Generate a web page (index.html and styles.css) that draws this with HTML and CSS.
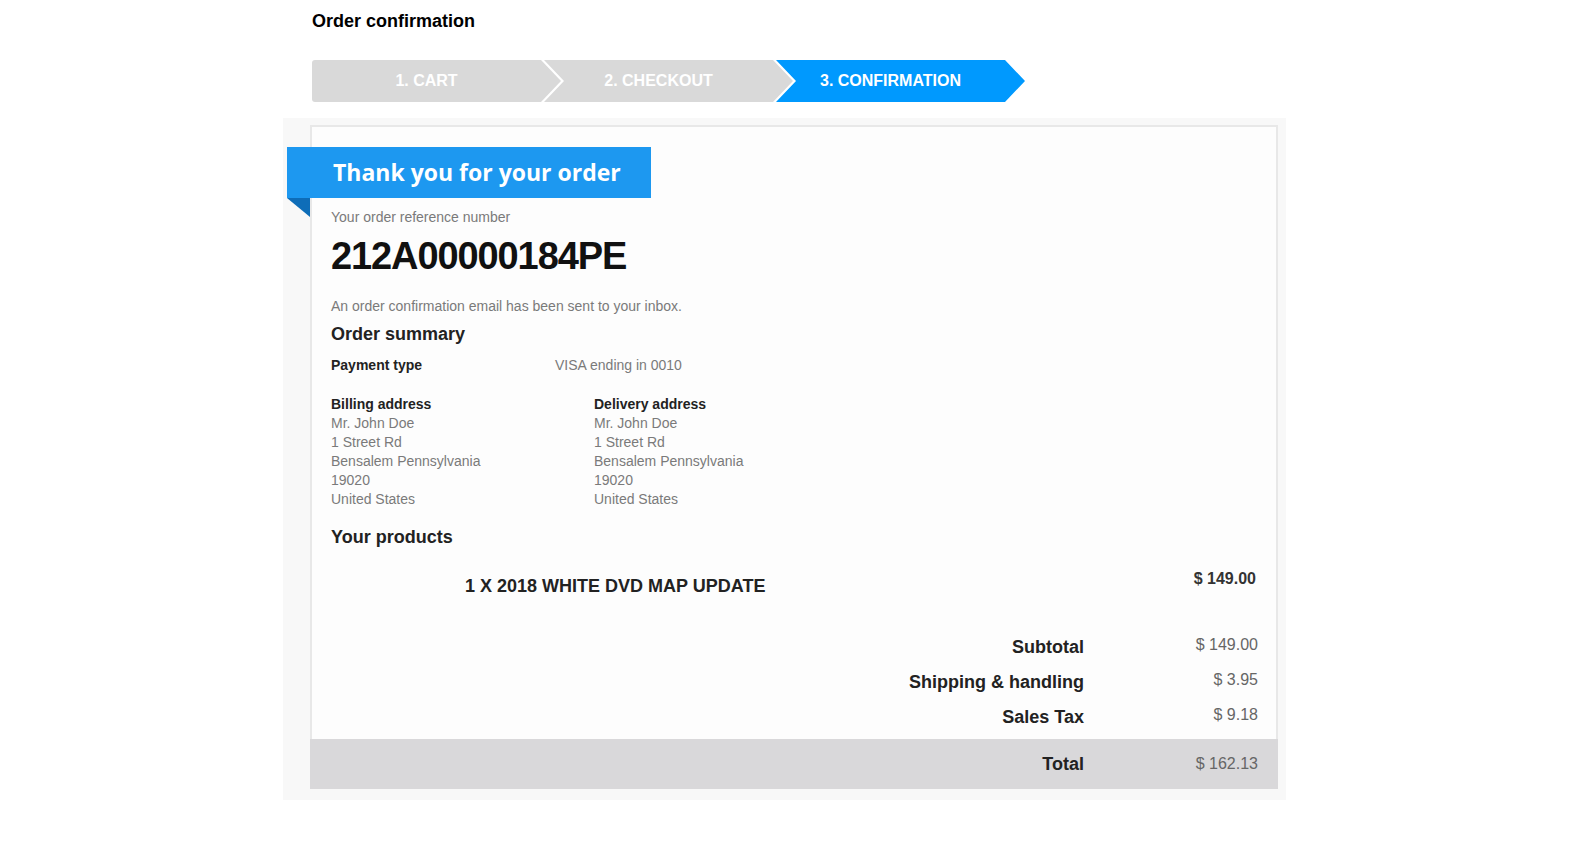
FILE: index.html
```html
<!DOCTYPE html>
<html lang="en">
<head>
<meta charset="utf-8">
<title>Order confirmation</title>
<link rel="stylesheet" href="styles.css">
</head>
<body>
<div class="page">
  <h1 class="title">Order confirmation</h1>
  <nav class="steps">
    <div class="step step-first">1. CART</div>
    <div class="step">2. CHECKOUT</div>
    <div class="step step-active">3. CONFIRMATION</div>
  </nav>
  <div class="panel">
    <div class="card">
      <div class="ribbon">Thank you for your order</div>
      <div class="content">
        <p class="muted ref-label">Your order reference number</p>
        <p class="order-no">212A00000184PE</p>
        <p class="muted email-note">An order confirmation email has been sent to your inbox.</p>
        <h2 class="section-title">Order summary</h2>
        <div class="pay-row">
          <span class="label pay-label">Payment type</span>
          <span class="muted">VISA ending in 0010</span>
        </div>
        <div class="addresses">
          <div class="address">
            <div class="label">Billing address</div>
            <div class="muted">Mr. John Doe</div>
            <div class="muted">1 Street Rd</div>
            <div class="muted">Bensalem Pennsylvania</div>
            <div class="muted">19020</div>
            <div class="muted">United States</div>
          </div>
          <div class="address">
            <div class="label">Delivery address</div>
            <div class="muted">Mr. John Doe</div>
            <div class="muted">1 Street Rd</div>
            <div class="muted">Bensalem Pennsylvania</div>
            <div class="muted">19020</div>
            <div class="muted">United States</div>
          </div>
        </div>
        <h2 class="section-title products-title">Your products</h2>
        <div class="product-row">
          <span class="product-name">1 X 2018 WHITE DVD MAP UPDATE</span>
          <span class="product-price">$ 149.00</span>
        </div>
        <div class="totals">
          <div class="total-row"><span class="t-label">Subtotal</span><span class="t-value">$ 149.00</span></div>
          <div class="total-row"><span class="t-label">Shipping &amp; handling</span><span class="t-value">$ 3.95</span></div>
          <div class="total-row"><span class="t-label">Sales Tax</span><span class="t-value">$ 9.18</span></div>
        </div>
      </div>
      <div class="grand-total"><span class="t-label">Total</span><span class="t-value">$ 162.13</span></div>
    </div>
  </div>
</div>
</body>
</html>
```

FILE: styles.css
```css
* { box-sizing: border-box; }
body {
  margin: 0;
  background: #ffffff;
  font-family: "Liberation Sans", Arial, sans-serif;
  color: #222;
}
p, h1, h2 { margin: 0; }

.page {
  width: 1003px;
  margin-left: 283px;
}

.title {
  padding: 10px 0 0 29px;
  font-size: 18px;
  line-height: 22px;
  font-weight: 700;
  color: #000;
}

.steps {
  display: flex;
  margin: 28px 0 0 29px;
  height: 42px;
}
.step {
  flex: none;
  width: 249px;
  margin-left: -17px;
  padding-right: 20px;
  display: flex;
  align-items: center;
  justify-content: center;
  background: #d9d9d9;
  color: #ffffff;
  font-size: 16px;
  font-weight: 700;
  clip-path: polygon(0 0, calc(100% - 20px) 0, 100% 50%, calc(100% - 20px) 100%, 0 100%, 20px 50%);
}
.step-first {
  margin-left: 0;
  border-radius: 3px 0 0 3px;
  clip-path: polygon(0 0, calc(100% - 20px) 0, 100% 50%, calc(100% - 20px) 100%, 0 100%);
}
.step-active {
  background: #0099fe;
}

.panel {
  margin-top: 16px;
  background: #f8f8f8;
  padding: 7px 8px 11px 27px;
}
.card {
  border: 2px solid #e8e8e8;
  background: #fdfdfd;
}

.ribbon {
  position: relative;
  margin: 20px 0 0 -25px;
  width: 364px;
  height: 51px;
  padding-left: 46px;
  background: #1d98f0;
  color: #ffffff;
  font-family: "Open Sans", "Liberation Sans", sans-serif;
  font-weight: 700;
  font-size: 23px;
  line-height: 51px;
}
.ribbon::after {
  content: "";
  position: absolute;
  left: 0;
  top: 100%;
  width: 23px;
  height: 19px;
  background: #0e6db8;
  clip-path: polygon(0 0, 100% 0, 100% 100%);
}

.content {
  padding: 0 18px 11px 19px;
}
.muted {
  color: #7a7a7a;
  font-size: 14px;
  line-height: 18px;
}
.label {
  font-size: 14px;
  line-height: 18px;
  font-weight: 700;
  color: #222;
}
.ref-label { margin-top: 10px; }
.order-no {
  margin-top: 8px;
  font-size: 38px;
  line-height: 44px;
  font-weight: 700;
  letter-spacing: -1.1px;
  color: #111;
}
.email-note { margin-top: 19px; }
.section-title {
  margin-top: 8px;
  font-size: 18px;
  line-height: 22px;
  font-weight: 700;
  color: #222;
}
.pay-row {
  display: flex;
  margin-top: 10.5px;
}
.pay-label { width: 224px; }

.addresses {
  display: flex;
  margin-top: 21px;
}
.address { width: 263px; }
.address .label,
.address .muted { line-height: 19px; }

.products-title { margin-top: 17.5px; }

.product-row {
  display: flex;
  align-items: flex-start;
  margin-top: 20.5px;
}
.product-name {
  margin: 6px 0 0 134px;
  font-size: 18px;
  line-height: 22px;
  font-weight: 700;
  color: #222;
}
.product-price {
  margin-left: auto;
  margin-right: 2px;
  font-size: 16px;
  line-height: 20px;
  font-weight: 700;
  color: #333;
}

.totals {
  display: flex;
  flex-direction: column;
  gap: 12px;
  margin-top: 38.5px;
}
.total-row {
  display: flex;
  justify-content: flex-end;
  align-items: flex-start;
}
.t-label {
  margin-top: 1px;
  font-size: 18px;
  line-height: 22px;
  font-weight: 700;
  color: #222;
}
.t-value {
  width: 174px;
  text-align: right;
  font-size: 16px;
  line-height: 20px;
  color: #666;
}

.grand-total {
  display: flex;
  justify-content: flex-end;
  align-items: center;
  height: 50px;
  margin: 0 -2px -2px;
  padding-right: 20px;
  background: #d9d8da;
}
.grand-total .t-label { margin-top: 0; }
```
